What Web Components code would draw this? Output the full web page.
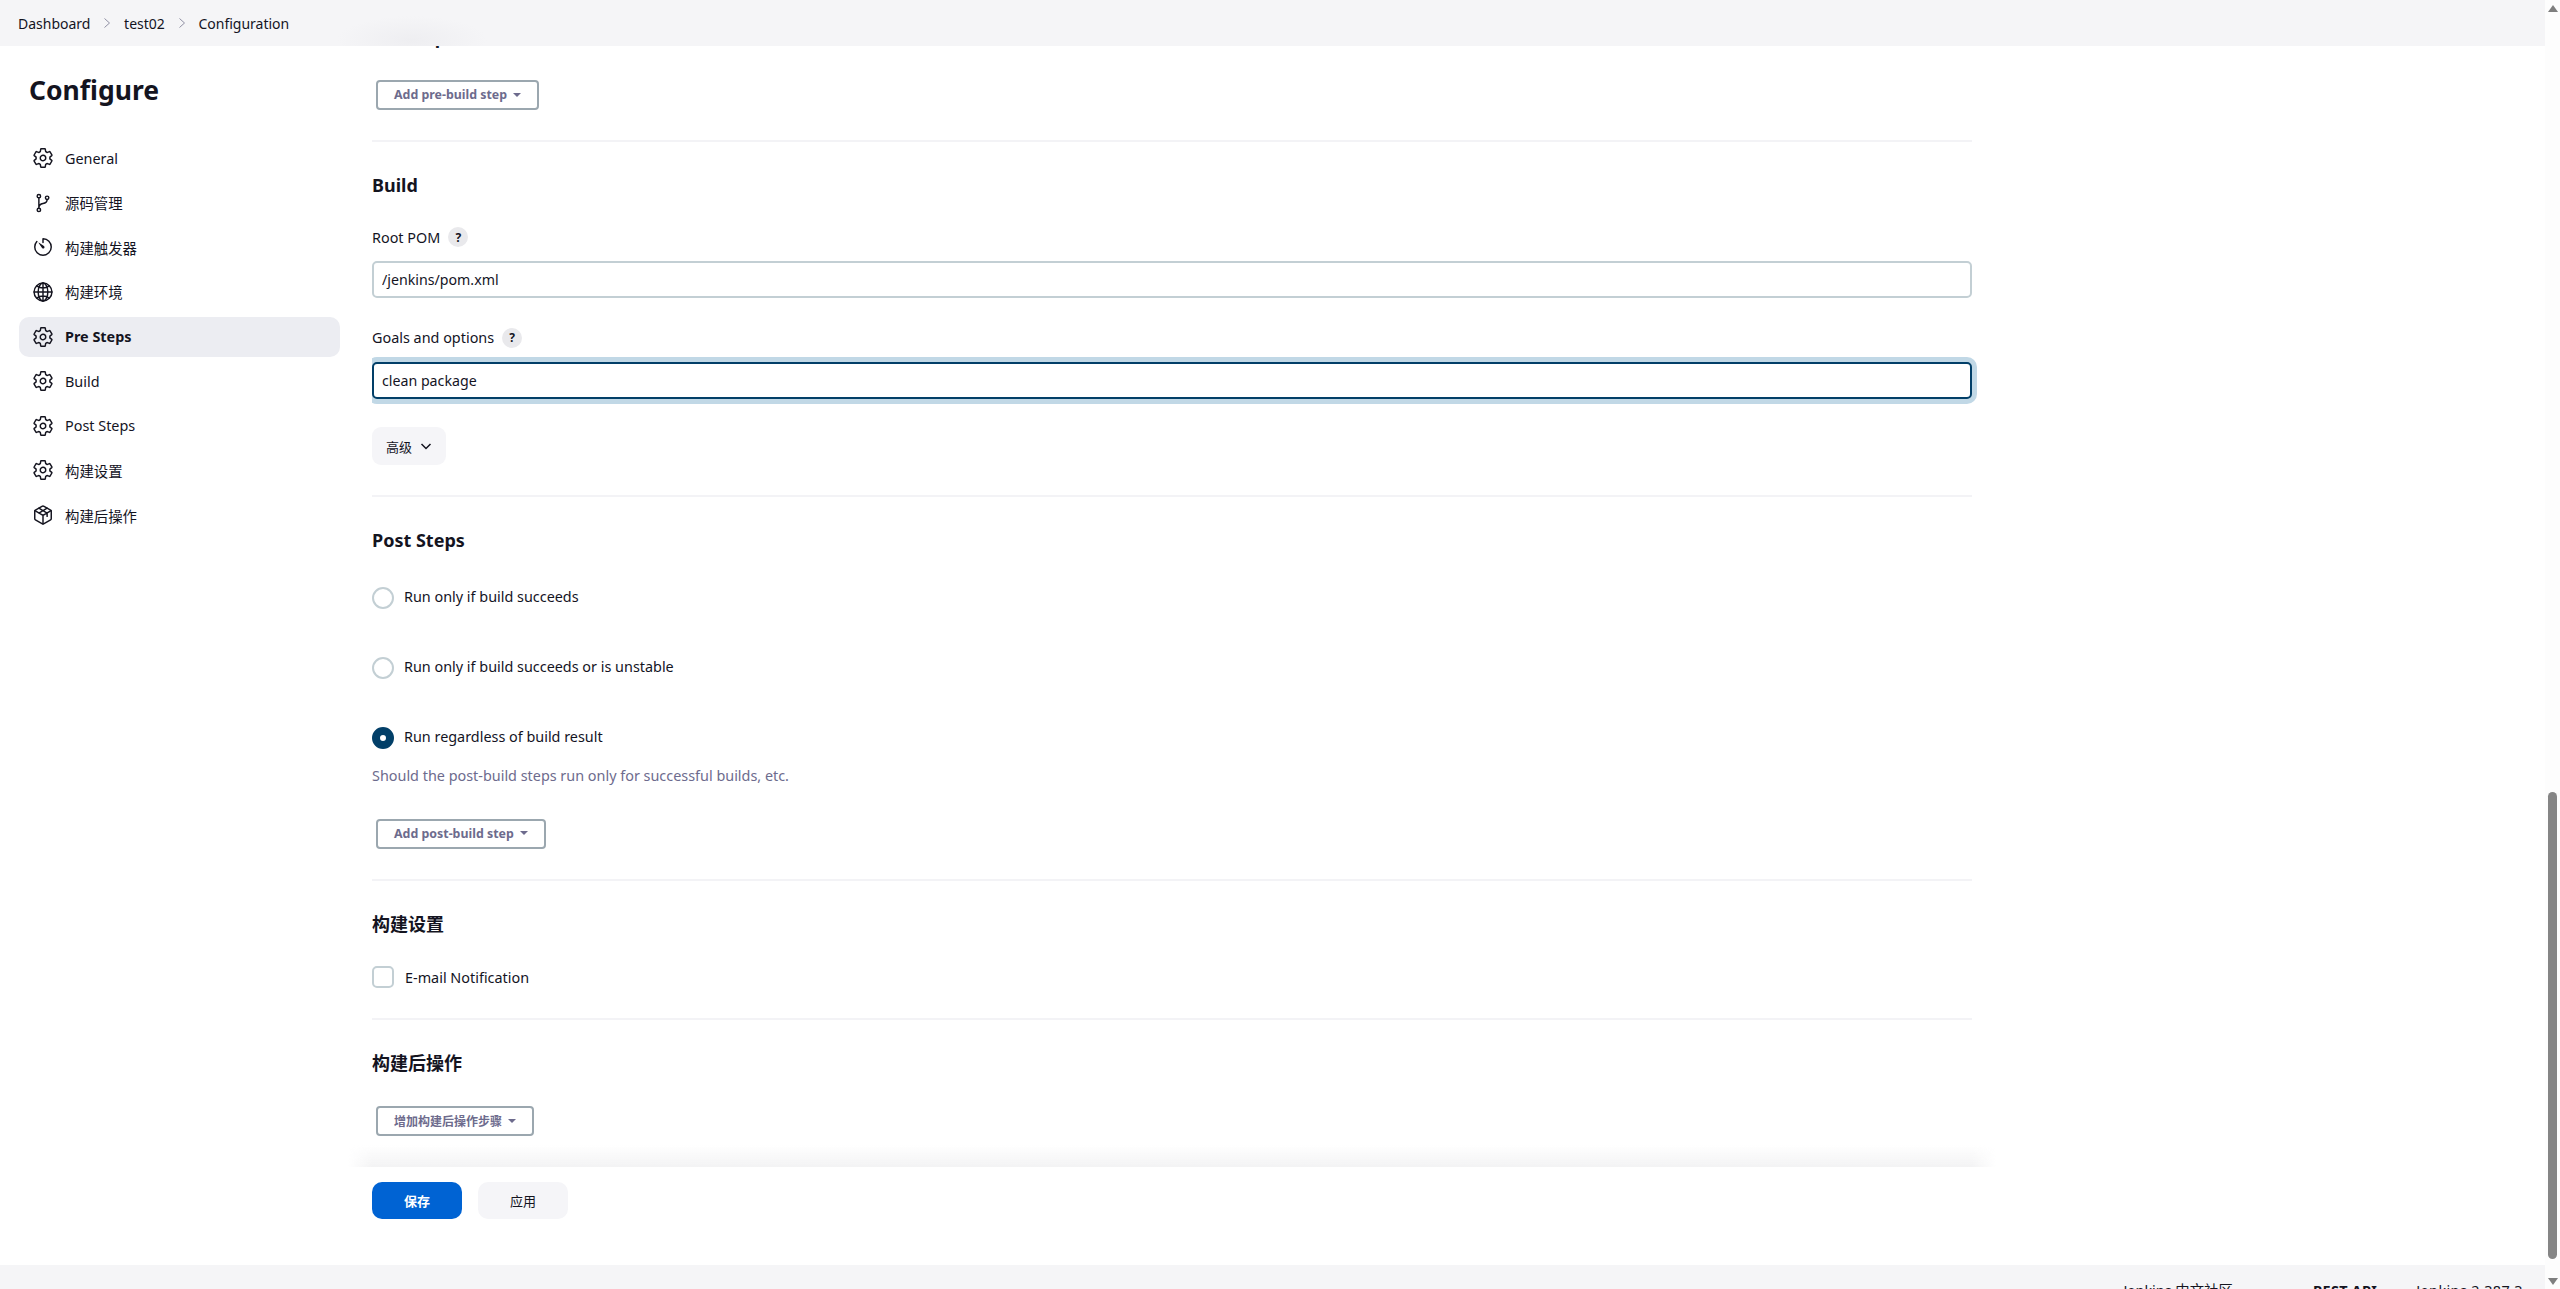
<!DOCTYPE html>
<html lang="zh">
<head>
<meta charset="utf-8">
<title>test02 Configuration</title>
<style>
    html, body {
        margin: 0;
        height: 100%;
        overflow: hidden;
    }

    body {
        font-family: "Noto Sans", "Noto Sans CJK SC", sans-serif;
        font-size: 14.4px;
        color: #14141f;
        background: #fff;
    }
</style>
</head>
<body>
<jenkins-page>
    <bread-crumbs slot="top"></bread-crumbs>
    <side-nav slot="side"></side-nav>

    <div slot="main">
        <config-section heading="Pre Steps" cut>
            <step-button>Add pre-build step</step-button>
        </config-section>

        <config-section heading="Build">
            <text-field label="Root POM" value="/jenkins/pom.xml"></text-field>
            <text-field label="Goals and options" value="clean package" focused></text-field>
            <advanced-button></advanced-button>
        </config-section>

        <config-section heading="Post Steps" class="post">
            <radio-option>Run only if build succeeds</radio-option>
            <radio-option>Run only if build succeeds or is unstable</radio-option>
            <radio-option checked>Run regardless of build result</radio-option>
            <help-line>Should the post-build steps run only for successful builds, etc.</help-line>
            <step-button>Add post-build step</step-button>
        </config-section>

        <config-section heading="构建设置" class="settings">
            <check-option>E-mail Notification</check-option>
        </config-section>

        <config-section heading="构建后操作" last>
            <step-button style="--step-size: 12px">增加构建后操作步骤</step-button>
        </config-section>
    </div>

    <save-bar slot="bar"></save-bar>
    <page-footer slot="footer"></page-footer>
    <fake-scrollbar slot="scroll"></fake-scrollbar>
</jenkins-page>

<script>
// icons used by the side nav, all on a 512 grid
const GEAR = `<path d="M262.29 192.31a64 64 0 1057.4 57.4 64.13 64.13 0 00-57.4-57.4zM416.39 256a154.34 154.34 0 01-1.53 20.79l45.21 35.46a10.81 10.81 0 012.45 13.75l-42.77 74a10.81 10.81 0 01-13.14 4.59l-44.9-18.08a16.11 16.11 0 00-15.17 1.75A164.48 164.48 0 01325 400.8a15.94 15.94 0 00-8.82 12.14l-6.73 47.89a11.08 11.08 0 01-10.68 9.17h-85.54a11.11 11.11 0 01-10.69-8.87l-6.72-47.82a16.07 16.07 0 00-9-12.22 155.3 155.3 0 01-21.46-12.57 16 16 0 00-15.11-1.71l-44.89 18.07a10.81 10.81 0 01-13.14-4.58l-42.77-74a10.8 10.8 0 012.45-13.75l38.21-30a16.05 16.05 0 006-14.08c-.36-4.17-.58-8.33-.58-12.5s.21-8.27.58-12.35a16 16 0 00-6.07-13.94l-38.19-30A10.81 10.81 0 0149.48 186l42.77-74a10.81 10.81 0 0113.14-4.59l44.9 18.08a16.11 16.11 0 0015.17-1.75A164.48 164.48 0 01187 111.2a15.94 15.94 0 008.82-12.14l6.73-47.89A11.08 11.08 0 01213.23 42h85.54a11.11 11.11 0 0110.69 8.87l6.72 47.82a16.07 16.07 0 009 12.22 155.3 155.3 0 0121.46 12.57 16 16 0 0015.11 1.71l44.89-18.07a10.81 10.81 0 0113.14 4.58l42.77 74a10.8 10.8 0 01-2.45 13.75l-38.21 30a16.05 16.05 0 00-6.05 14.08c.33 4.14.55 8.3.55 12.47z"/>`;
const BRANCH = `<circle cx="160" cy="96" r="40"/><circle cx="160" cy="416" r="40"/><circle cx="352" cy="136" r="40"/><path d="M160 136v240M352 176c0 64-40 84-96 92-48 8-96 30-96 100"/>`;
const TIMER = `<path d="M112.91 128A191.85 191.85 0 0064 254c-1.18 106.35 85.65 193.8 192 194 106.2.2 192-85.83 192-192 0-104.54-83.55-189.61-187.5-192a4.36 4.36 0 00-4.5 4.37V152"/><path fill="#14141f" stroke="none" d="M233.38 278.63l-79-113a8.13 8.13 0 0111.32-11.32l113 79a32.5 32.5 0 01-37 53.34 33.21 33.21 0 01-7.32-8.02z"/>`;
const GLOBE = `<path d="M256 48C141.13 48 48 141.13 48 256s93.13 208 208 208 208-93.13 208-208S370.87 48 256 48z"/><path d="M256 48c-58.07 0-112.67 92.47-112.67 208S197.93 464 256 464s112.67-92.47 112.67-208S314.07 48 256 48z"/><path d="M117.33 117.33c38.24 27.15 86.38 43.34 138.67 43.34s100.43-16.19 138.67-43.34M394.67 394.67c-38.24-27.15-86.38-43.34-138.67-43.34s-100.43 16.19-138.67 43.34M256 48v416M464 256H48"/>`;
const BOX = `<path d="M448 341.37V170.61A32 32 0 00432.11 143l-152-88.46a47.94 47.94 0 00-48.24 0L79.89 143A32 32 0 0064 170.61v170.76A32 32 0 0079.89 369l152 88.46a48 48 0 0048.24 0l152-88.46A32 32 0 00448 341.37z"/><path d="M69 154l187 110 187-110M256 464V264M160 98l192 112v78M352 98L160 210"/>`;

class JenkinsPage extends HTMLElement {
    constructor() {
        super();
        this.attachShadow({ mode: 'open' });
        this.shadowRoot.innerHTML = `
        <style>
            :host {
                display: grid;
                grid-template-columns: 1fr 15px;
                height: 1289px;
                overflow: hidden;
            }

            .page {
                display: flex;
                flex-direction: column;
                min-width: 0;
                height: 1289px;
            }

            .middle {
                display: flex;
                flex: 0 0 1219px;
                height: 1219px;
            }

            .side {
                flex: 0 0 372px;
                box-sizing: border-box;
                width: 372px;
                padding-left: 19px;
            }

            .content {
                width: 1600px;
                display: flex;
                flex-direction: column;
                height: 1219px;
            }

            .scroller {
                flex: 1;
                overflow: hidden;
                min-height: 0;
                /* room for the focus ring of the input at the right edge */
                margin-right: -8px;
                padding-right: 8px;
            }
        </style>
        <div class="page">
            <slot name="top"></slot>
            <div class="middle">
                <div class="side"><slot name="side"></slot></div>
                <div class="content">
                    <div class="scroller"><slot name="main"></slot></div>
                    <slot name="bar"></slot>
                </div>
            </div>
            <slot name="footer"></slot>
        </div>
        <slot name="scroll"></slot>
        `;
    }
}

class BreadCrumbs extends HTMLElement {
    constructor() {
        super();
        this.attachShadow({ mode: 'open' });
        this.shadowRoot.innerHTML = `
        <style>
            :host {
                display: flex;
                align-items: center;
                height: 46px;
                padding-left: 18px;
                /* the blur is the heading that has scrolled under the bar */
                background: radial-gradient(ellipse 75px 24px at 412px 40px, #eeeef1, transparent), #f5f5f7;
                font-size: 14px;
            }

            span { color: #14141f; }

            svg {
                width: 10px;
                height: 10px;
                margin: 0 11.8px;
                fill: none;
                stroke: #8f8fa3;
                stroke-width: 1;
            }
        </style>
        <span>Dashboard</span>
        <svg viewBox="0 0 10 10"><path d="M2.5 .5L7.5 5l-5 4.5"/></svg>
        <span>test02</span>
        <svg viewBox="0 0 10 10"><path d="M2.5 .5L7.5 5l-5 4.5"/></svg>
        <span>Configuration</span>
        `;
    }
}

class SideNav extends HTMLElement {
    constructor() {
        super();

        const items = [
            ['General', GEAR], ['源码管理', BRANCH], ['构建触发器', TIMER], ['构建环境', GLOBE],
            ['Pre Steps', GEAR, true], ['Build', GEAR], ['Post Steps', GEAR], ['构建设置', GEAR], ['构建后操作', BOX]
        ];

        this.attachShadow({ mode: 'open' });
        this.shadowRoot.innerHTML = `
        <style>
            :host {
                display: block;
                width: 321px;
            }

            h1 {
                margin: 23px 0 0 10px;
                font-size: 26.5px;
                line-height: 42px;
                font-weight: 700;
            }

            ul {
                list-style: none;
                margin: 27px 0 0;
                padding: 0;
                display: flex;
                flex-direction: column;
                gap: 4.65px;
            }

            li {
                display: flex;
                align-items: center;
                gap: 11px;
                height: 40px;
                padding-left: 13px;
                border-radius: 10px;
            }

            li.active {
                background: #ecedf2;
                font-weight: 700;
            }

            svg {
                width: 22px;
                height: 22px;
                fill: none;
                stroke: #14141f;
                stroke-width: 34;
                stroke-linejoin: round;
                stroke-linecap: round;
            }
        </style>
        <h1>Configure</h1>
        <ul>
            ${items.map(([name, icon, active]) => `
                <li class="${active ? 'active' : ''}"><svg viewBox="0 0 512 512">${icon}</svg><span>${name}</span></li>
            `).join('')}
        </ul>
        `;
    }
}

class ConfigSection extends HTMLElement {
    constructor() {
        super();
        this.attachShadow({ mode: 'open' });
        this.shadowRoot.innerHTML = `
        <style>
            :host {
                display: block;
                border-bottom: 2px solid #f3f3f6;
                padding-bottom: 30px;
            }

            :host([last]) {
                border-bottom: 0;
                padding-bottom: 0;
            }

            h2 {
                margin: 29px 0 27px;
                font-size: 18px;
                line-height: 28px;
                font-weight: 700;
            }

            /* this section has scrolled, its heading runs under the top bar */
            :host([cut]) h2 { margin: -23px 0 29px; }

            :host(.post) h2 { margin-bottom: 33.4px; }
            :host(.settings) h2 { margin-bottom: 28.5px; }
            :host([last]) h2 { margin-bottom: 29px; }
        </style>
        <h2></h2>
        <slot></slot>
        `;
    }

    connectedCallback() {
        this.shadowRoot.querySelector('h2').innerText = this.getAttribute('heading');
    }
}

class StepButton extends HTMLElement {
    constructor() {
        super();
        this.attachShadow({ mode: 'open' });
        this.shadowRoot.innerHTML = `
        <style>
            :host {
                display: block;
                width: fit-content;
                margin-left: 4px;
            }

            button {
                display: flex;
                align-items: center;
                gap: 6px;
                box-sizing: border-box;
                height: 30px;
                padding: 0 16px 1px;
                border: 2px solid #9ba7af;
                border-radius: 4px;
                background: #fff;
                color: #6d6b8d;
                font: 700 var(--step-size, 12.4px) "Noto Sans", "Noto Sans CJK SC", sans-serif;
            }

            i {
                width: 0;
                height: 0;
                border: 4px solid transparent;
                border-top-color: #6d6b8d;
                border-bottom: 0;
            }
        </style>
        <button><slot></slot><i></i></button>
        `;
    }
}

class TextField extends HTMLElement {
    constructor() {
        super();
        this.attachShadow({ mode: 'open' });
        this.shadowRoot.innerHTML = `
        <style>
            :host {
                display: block;
                margin-bottom: 28.5px;
            }

            label {
                display: flex;
                align-items: center;
                gap: 8px;
                height: 22px;
                margin-bottom: 13px;
            }

            b {
                display: grid;
                place-items: center;
                width: 20px;
                height: 20px;
                border-radius: 50%;
                background: #e9e9ec;
                font-size: 12px;
            }

            input {
                display: block;
                box-sizing: border-box;
                width: 100%;
                height: 37px;
                padding: 0 8px;
                border: 2px solid #c3cfd4;
                border-radius: 5px;
                outline: 0;
                color: #14141f;
                font: 14.2px "Noto Sans", "Noto Sans CJK SC", sans-serif;
            }

            input.focused {
                border-color: #023f68;
                box-shadow: 0 0 0 5px #c1d8e6;
            }
        </style>
        <label><span></span><b>?</b></label>
        <input type="text">
        `;
    }

    connectedCallback() {
        let input = this.shadowRoot.querySelector('input');
        this.shadowRoot.querySelector('span').innerText = this.getAttribute('label');
        input.setAttribute('value', this.getAttribute('value'));
        input.className = this.hasAttribute('focused') ? 'focused' : '';
    }
}

class AdvancedButton extends HTMLElement {
    constructor() {
        super();
        this.attachShadow({ mode: 'open' });
        this.shadowRoot.innerHTML = `
        <style>
            :host {
                display: flex;
                align-items: center;
                justify-content: center;
                gap: 8px;
                width: 74px;
                height: 38px;
                border-radius: 9px;
                background: #f5f5f8;
                font-size: 13px;
            }

            svg {
                width: 12px;
                height: 12px;
                fill: none;
                stroke: #14141f;
                stroke-width: 1.5;
            }
        </style>
        <span>高级</span>
        <svg viewBox="0 0 12 12"><path d="M1.5 4L6 8.5 10.5 4"/></svg>
        `;
    }
}

class RadioOption extends HTMLElement {
    constructor() {
        super();
        this.attachShadow({ mode: 'open' });
        this.shadowRoot.innerHTML = `
        <style>
            :host {
                display: flex;
                align-items: center;
                gap: 10px;
                height: 22px;
                margin-bottom: 48px;
            }

            i {
                box-sizing: border-box;
                width: 22px;
                height: 22px;
                border: 2px solid #c3cfd4;
                border-radius: 50%;
            }

            :host([checked]) {
                margin-bottom: 0;
            }

            :host([checked]) i {
                border: 8px solid #023f68;
            }

            span { margin-top: -3px; }
        </style>
        <i></i><span><slot></slot></span>
        `;
    }
}

class HelpLine extends HTMLElement {
    constructor() {
        super();
        this.attachShadow({ mode: 'open' });
        this.shadowRoot.innerHTML = `
        <style>
            :host {
                display: block;
                margin: 17px 0 32.5px;
                line-height: 20px;
                color: #6d6b8d;
            }
        </style>
        <slot></slot>
        `;
    }
}

class CheckOption extends HTMLElement {
    constructor() {
        super();
        this.attachShadow({ mode: 'open' });
        this.shadowRoot.innerHTML = `
        <style>
            :host {
                display: flex;
                align-items: center;
                gap: 11px;
                height: 22px;
            }

            i {
                box-sizing: border-box;
                width: 22px;
                height: 22px;
                border: 2px solid #c3cfd4;
                border-radius: 5px;
            }
        </style>
        <i></i><span><slot></slot></span>
        `;
    }
}

class SaveBar extends HTMLElement {
    constructor() {
        super();
        this.attachShadow({ mode: 'open' });
        this.shadowRoot.innerHTML = `
        <style>
            :host {
                display: flex;
                align-items: flex-start;
                flex: 0 0 98px;
                gap: 16px;
                height: 98px;
                box-sizing: border-box;
                padding-top: 15px;
                position: relative;
            }

            :host::before {
                content: "";
                position: absolute;
                left: -24px;
                right: -24px;
                top: -22px;
                height: 22px;
                background: linear-gradient(transparent, #f3f3f4);
                -webkit-mask-image: linear-gradient(90deg, transparent, #000 24px, #000 calc(100% - 24px), transparent);
            }

            button {
                width: 90px;
                height: 37px;
                padding-bottom: 2px;
                border: 0;
                border-radius: 10px;
                background: #f5f5f8;
                color: #14141f;
                font: 13px "Noto Sans", "Noto Sans CJK SC", sans-serif;
            }

            button.save {
                background: #0063d3;
                color: #fff;
                font-weight: 700;
            }
        </style>
        <button class="save">保存</button>
        <button>应用</button>
        `;
    }
}

class PageFooter extends HTMLElement {
    constructor() {
        super();
        this.attachShadow({ mode: 'open' });
        this.shadowRoot.innerHTML = `
        <style>
            :host {
                display: flex;
                justify-content: flex-end;
                height: 24px;
                box-sizing: border-box;
                padding: 16px 22px 0 0;
                background: #f5f5f7;
                line-height: 20px;
                overflow: hidden;
            }

            b {
                margin: 0 39px 0 80px;
                font-weight: 700;
                letter-spacing: .3px;
            }

            .version { letter-spacing: .4px; }
        </style>
        <span>Jenkins 中文社区</span>
        <b>REST API</b>
        <span class="version">Jenkins 2.387.3</span>
        `;
    }
}

class FakeScrollbar extends HTMLElement {
    constructor() {
        super();
        this.attachShadow({ mode: 'open' });
        this.shadowRoot.innerHTML = `
        <style>
            :host {
                display: flex;
                flex-direction: column;
                align-items: center;
                height: 1289px;
                background: #fdfdfd;
            }

            i {
                flex: 0 0 auto;
                width: 0;
                height: 0;
                border: 5px solid transparent;
            }

            .up {
                margin-top: 5px;
                border-bottom: 7px solid #7f7f7f;
                border-top: 0;
            }

            .down {
                border-top: 7px solid #7f7f7f;
                border-bottom: 0;
            }

            .thumb {
                width: 9px;
                height: 467px;
                margin: 780px 0 19px;
                border-radius: 4.5px;
                background: #858585;
            }
        </style>
        <i class="up"></i>
        <div class="thumb"></div>
        <i class="down"></i>
        `;
    }
}

customElements.define('jenkins-page', JenkinsPage);
customElements.define('bread-crumbs', BreadCrumbs);
customElements.define('side-nav', SideNav);
customElements.define('config-section', ConfigSection);
customElements.define('step-button', StepButton);
customElements.define('text-field', TextField);
customElements.define('advanced-button', AdvancedButton);
customElements.define('radio-option', RadioOption);
customElements.define('help-line', HelpLine);
customElements.define('check-option', CheckOption);
customElements.define('save-bar', SaveBar);
customElements.define('page-footer', PageFooter);
customElements.define('fake-scrollbar', FakeScrollbar);
</script>
</body>
</html>
